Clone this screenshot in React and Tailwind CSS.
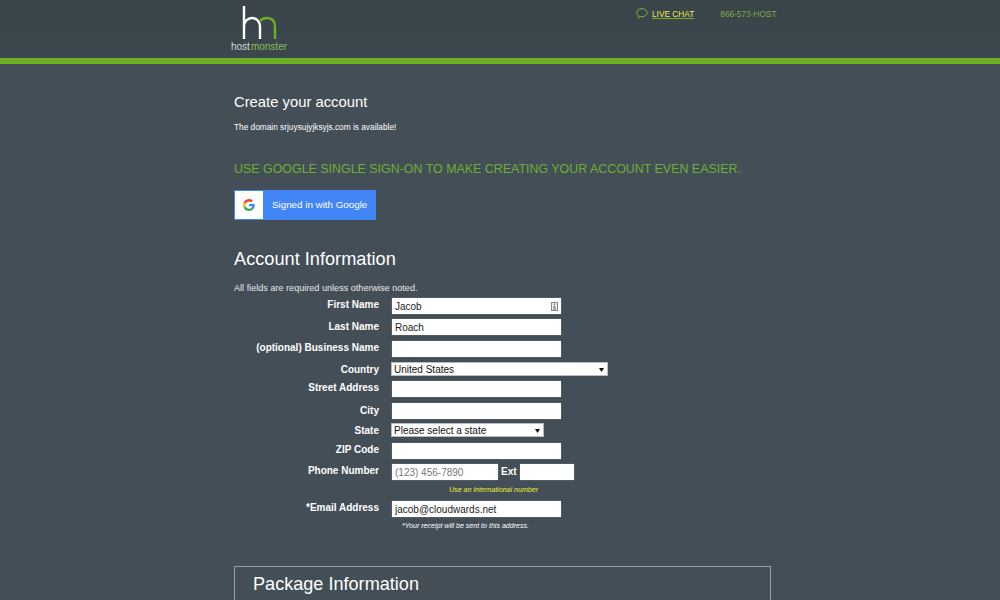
const FONT = "font-['Liberation_Sans',Arial,sans-serif]"

function GoogleIcon() {
  return (
    <svg width="12" height="12" viewBox="0 0 48 48">
      <path fill="#EA4335" d="M24 9.500c3.500 0 6.600 1.200 9.100 3.600l6.800-6.800C35.800 2.500 30.400 0 24 0 14.600 0 6.500 5.400 2.600 13.200l7.900 6.200C12.400 13.700 17.700 9.500 24 9.500z" />
      <path fill="#4285F4" d="M46.900 24.500c0-1.600-.1-3.100-.4-4.500H24v9h12.900c-.6 3-2.200 5.500-4.700 7.200l7.600 5.900c4.400-4.100 7.100-10.100 7.100-17.600z" />
      <path fill="#FBBC05" d="M10.500 28.600c-.5-1.400-.8-3-.8-4.600s.3-3.200.8-4.600l-7.900-6.200C.9 16.500 0 20.100 0 24s.9 7.500 2.600 10.800l7.900-6.200z" />
      <path fill="#34A853" d="M24 48c6.500 0 11.900-2.100 15.800-5.800l-7.600-5.900c-2.100 1.400-4.900 2.300-8.200 2.300-6.300 0-11.600-4.200-13.500-10l-7.900 6.200C6.500 42.600 14.600 48 24 48z" />
    </svg>
  )
}

function Label({ children, className = '' }) {
  return (
    <label className={`w-[145px] shrink-0 text-right text-[10px] leading-[13px] font-bold text-white ${className}`}>
      {children}
    </label>
  )
}

function TextInput({ value, placeholder, className = 'w-[169px]' }) {
  return (
    <input
      type="text"
      readOnly
      value={value}
      placeholder={placeholder}
      className={`h-[16px] bg-white px-[3px] text-[10px] text-[#222] placeholder:text-[#777] outline-none shadow-[0_0_1px_#999] ${className}`}
    />
  )
}

function FakeSelect({ value, className }) {
  return (
    <div className={`ml-[-1px] flex h-[14px] items-center justify-between border border-[#bbb] bg-white pl-[2px] pr-[3px] pt-[1px] text-[10px] leading-none text-[#111] ${className}`}>
      <span>{value}</span>
      <svg width="5" height="4" viewBox="0 0 5 4"><path d="M0 0h5L2.500 4z" fill="#111" /></svg>
    </div>
  )
}

function Row({ label, labelClass, className, children }) {
  return (
    <div className={`flex items-start gap-[13px] ${className}`}>
      <Label className={labelClass}>{label}</Label>
      {children}
    </div>
  )
}

export default function App() {
  return (
    <div className={`h-[600px] overflow-hidden bg-[#444e57] ${FONT}`}>
      <header className="h-[64px] border-b-[6px] border-[#6cb023] bg-gradient-to-b from-[#39444b] to-[#3b464d]">
        <div className="mx-auto flex w-[1000px] items-start pl-[231px]">
          <div className="w-[405px] pt-[5px]">
            <svg width="38" height="35" viewBox="0 0 38 35" className="ml-[11px] block">
              <path d="M2 1v33M2 22c0-6 4-9 8-9s8 3 8 9v12" fill="none" stroke="#fff" strokeWidth="2.400" />
              <path d="M18 16c1.500-2 4-3 7-3 5 0 8 3 8 9v12" fill="none" stroke="#6cb023" strokeWidth="2.400" />
            </svg>
            <div className="mt-[1px] text-[10px] leading-[11px] text-[#d5d8da]">
              host<span className="ml-[1px] text-[#8fbc55]">monster</span>
            </div>
          </div>
          <div className="flex items-start pt-[8px] text-[8.300px] leading-[12px]">
            <svg width="12" height="11" viewBox="0 0 12 11" className="mr-[4px]">
              <path d="M6 .7c2.900 0 5.200 1.800 5.200 4S8.900 8.700 6 8.700c-.6 0-1.100-.1-1.600-.2L2.600 10l.2-2.200C1.500 7 .8 5.900.8 4.700.8 2.500 3.100.700 6 .7z" fill="none" stroke="#7fb52f" strokeWidth="1" />
            </svg>
            <a className="text-[#f0ee4a] underline decoration-[#6cb023]">LIVE CHAT</a>
            <span className="ml-[26px] text-[#7fae45]">866-573-HOST</span>
          </div>
        </div>
      </header>

      <main className="ml-[234px] w-[537px]">
        <h1 className="mt-[30px] text-[14.800px] leading-[17px] text-white">Create your account</h1>
        <p className="mt-[11px] text-[8.300px] leading-[11px] text-white">The domain srjuysujyjksyjs.com is available!</p>
        <p className="mt-[29px] text-[12.430px] leading-[15px] text-[#6cb033]">
          USE GOOGLE SINGLE SIGN-ON TO MAKE CREATING YOUR ACCOUNT EVEN EASIER.
        </p>
        <button className="mt-[13px] flex h-[30px] w-[142px] items-stretch border border-[#4285f4] bg-[#4285f4] text-[9.800px] text-white">
          <span className="flex w-[28px] items-center justify-center bg-white">
            <GoogleIcon />
          </span>
          <span className="pl-[9px] leading-[27px]">Signed in with Google</span>
        </button>

        <h2 className="mt-[29px] text-[18.200px] leading-[21px] text-white">Account Information</h2>
        <p className="mt-[13px] text-[9.100px] leading-[11px] text-[#e6e8e9]">All fields are required unless otherwise noted.</p>

        <form className="mt-[4px]">
          <Row label="First Name" className="relative h-[16px]">
            <TextInput value="Jacob" />
            <svg width="7" height="9" viewBox="0 0 7 9" className="absolute left-[317px] top-[4px]">
              <rect x=".5" y=".5" width="6" height="8" fill="#eee" stroke="#888" />
              <path d="M2 5h3M2 7h3M3.500 1.500v2" stroke="#666" />
            </svg>
          </Row>
          <Row label="Last Name" labelClass="pt-[1px]" className="mt-[5px]"><TextInput value="Roach" /></Row>
          <Row label="(optional) Business Name" className="mt-[6px]"><TextInput value="" /></Row>
          <Row label="Country" labelClass="pt-[1px]" className="mt-[5px]">
            <FakeSelect value="United States" className="w-[217px]" />
          </Row>
          <Row label="Street Address" className="mt-[5px]"><TextInput value="" /></Row>
          <Row label="City" labelClass="pt-[1px]" className="mt-[6px]"><TextInput value="" /></Row>
          <Row label="State" labelClass="pt-[1px]" className="mt-[4px]">
            <FakeSelect value="Please select a state" className="w-[153px]" />
          </Row>
          <Row label="ZIP Code" className="mt-[6px]"><TextInput value="" /></Row>
          <Row label="Phone Number" className="mt-[5px]">
            <div className="flex items-center">
              <TextInput placeholder="(123) 456-7890" value="" className="w-[106px]" />
              <span className="ml-[3px] text-[10px] leading-[16px] font-bold text-white">Ext</span>
              <TextInput value="" className="ml-[3px] w-[54px]" />
            </div>
          </Row>
          <p className="ml-[215px] mt-[5px] text-[7.100px] leading-[10px] italic text-[#eeee30]">Use an international number</p>
          <Row label="*Email Address" className="mt-[6px]"><TextInput value="jacob@cloudwards.net" /></Row>
          <p className="ml-[168px] mt-[4px] text-[7.050px] leading-[10px] italic text-white">*Your receipt will be sent to this address.</p>
        </form>

        <section className="mt-[35px] h-[60px] border border-[#9aa1a6] pl-[18px] pt-[7px]">
          <h2 className="text-[18.100px] leading-[21px] text-white">Package Information</h2>
        </section>
      </main>
    </div>
  )
}
